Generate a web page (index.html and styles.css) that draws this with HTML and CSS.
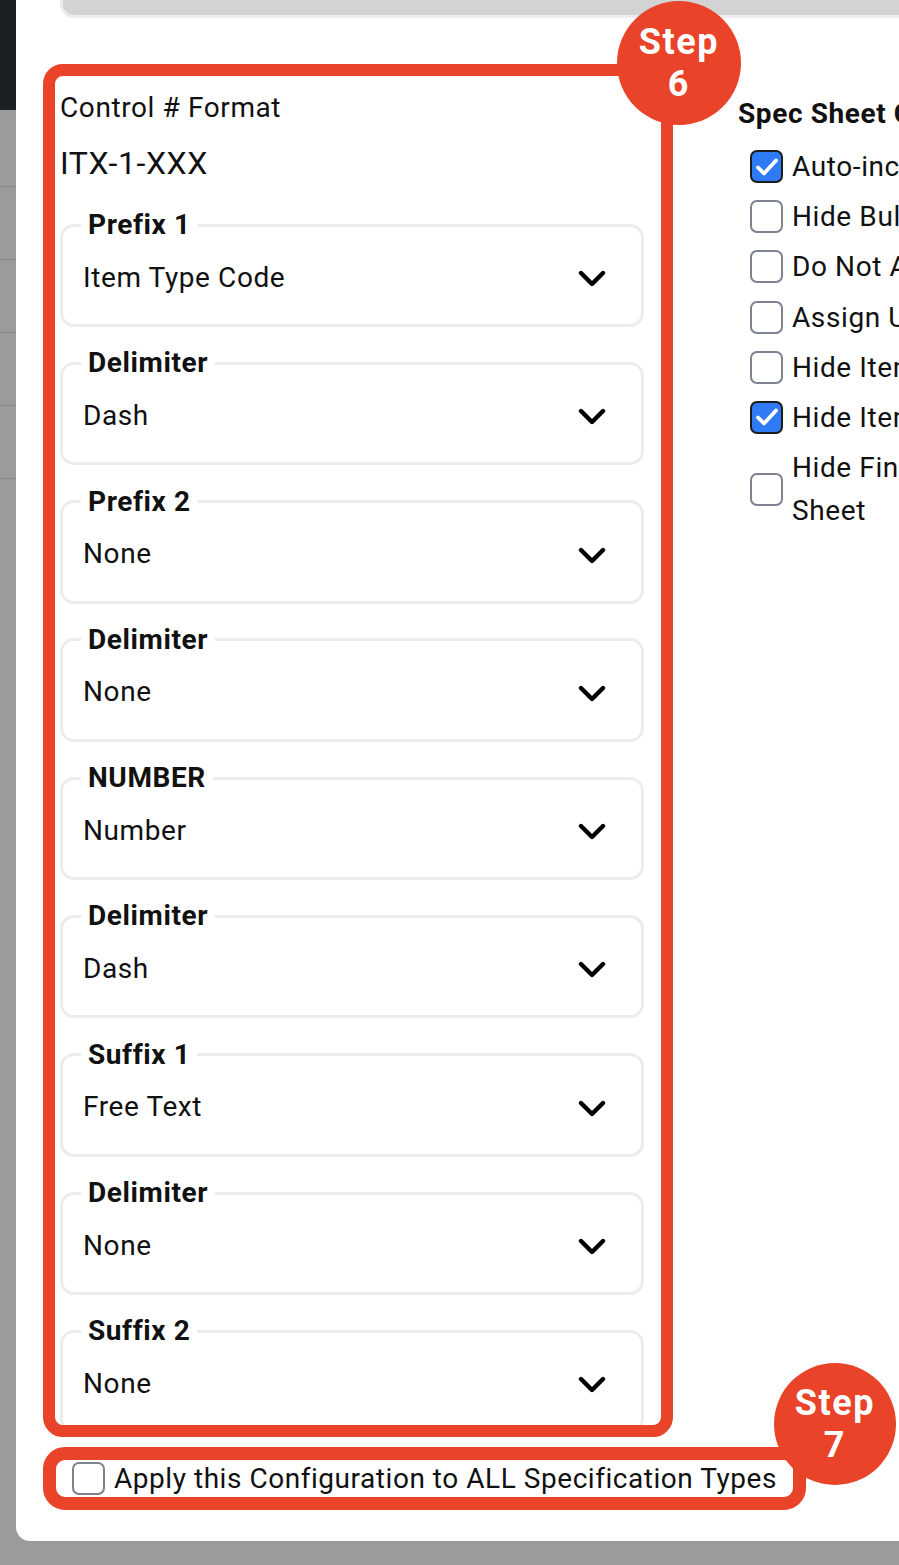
FILE: index.html
```html
<!DOCTYPE html>
<html lang="en">
<head>
    <meta charset="UTF-8">
    <meta name="viewport" content="width=device-width, initial-scale=1.0">
    <title>Control # Format</title>
    <link rel="stylesheet" href="styles.css">
</head>
<body>
<div class="page">
    <aside class="backdrop-nav">
        <div class="nav-top"></div>
        <div class="nav-row first"></div>
        <div class="nav-row"></div>
        <div class="nav-row"></div>
        <div class="nav-row"></div>
        <div class="nav-row"></div>
    </aside>

    <div class="modal">
        <div class="search-bar"></div>

        <div class="modal-body">
            <div class="format-col">
                <div class="format-box">
                    <div class="format-label">Control # Format</div>
                    <div class="format-preview">ITX-1-XXX</div>

                    <fieldset class="field">
                        <legend>Prefix 1</legend>
                        <div class="field-value"><span>Item Type Code</span><svg class="chevron" viewBox="0 0 28 18"><polyline points="3,3 14,14 25,3"/></svg></div>
                    </fieldset>
                    <fieldset class="field">
                        <legend>Delimiter</legend>
                        <div class="field-value"><span>Dash</span><svg class="chevron" viewBox="0 0 28 18"><polyline points="3,3 14,14 25,3"/></svg></div>
                    </fieldset>
                    <fieldset class="field">
                        <legend>Prefix 2</legend>
                        <div class="field-value"><span>None</span><svg class="chevron" viewBox="0 0 28 18"><polyline points="3,3 14,14 25,3"/></svg></div>
                    </fieldset>
                    <fieldset class="field">
                        <legend>Delimiter</legend>
                        <div class="field-value"><span>None</span><svg class="chevron" viewBox="0 0 28 18"><polyline points="3,3 14,14 25,3"/></svg></div>
                    </fieldset>
                    <fieldset class="field">
                        <legend>NUMBER</legend>
                        <div class="field-value"><span>Number</span><svg class="chevron" viewBox="0 0 28 18"><polyline points="3,3 14,14 25,3"/></svg></div>
                    </fieldset>
                    <fieldset class="field">
                        <legend>Delimiter</legend>
                        <div class="field-value"><span>Dash</span><svg class="chevron" viewBox="0 0 28 18"><polyline points="3,3 14,14 25,3"/></svg></div>
                    </fieldset>
                    <fieldset class="field">
                        <legend>Suffix 1</legend>
                        <div class="field-value"><span>Free Text</span><svg class="chevron" viewBox="0 0 28 18"><polyline points="3,3 14,14 25,3"/></svg></div>
                    </fieldset>
                    <fieldset class="field">
                        <legend>Delimiter</legend>
                        <div class="field-value"><span>None</span><svg class="chevron" viewBox="0 0 28 18"><polyline points="3,3 14,14 25,3"/></svg></div>
                    </fieldset>
                    <fieldset class="field">
                        <legend>Suffix 2</legend>
                        <div class="field-value"><span>None</span><svg class="chevron" viewBox="0 0 28 18"><polyline points="3,3 14,14 25,3"/></svg></div>
                    </fieldset>
                </div>

                <label class="apply-box">
                    <span class="box"></span>
                    <span>Apply this Configuration to ALL Specification Types</span>
                </label>

                <div class="step-badge step-6">Step<br>6</div>
                <div class="step-badge step-7">Step<br>7</div>
            </div>

            <div class="options-col">
                <div class="options-title">Spec Sheet Options</div>
                <div class="options-list">
                    <label class="option"><span class="box checked"><svg viewBox="0 0 28 28"><polyline points="5,14.5 11,20.5 23,7.5"/></svg></span><span>Auto-increment Control #</span></label>
                    <label class="option"><span class="box"></span><span>Hide Bulk Pricing</span></label>
                    <label class="option"><span class="box"></span><span>Do Not Auto-fill Vendor</span></label>
                    <label class="option"><span class="box"></span><span>Assign Unique Numbers</span></label>
                    <label class="option"><span class="box"></span><span>Hide Item Cost</span></label>
                    <label class="option"><span class="box checked"><svg viewBox="0 0 28 28"><polyline points="5,14.5 11,20.5 23,7.5"/></svg></span><span>Hide Item Images</span></label>
                    <label class="option wrap"><span class="box"></span><span>Hide Final Spec Sheet</span></label>
                </div>
            </div>
        </div>
    </div>
</div>
</body>
</html>
```

FILE: styles.css
```css
html, body {
    margin: 0;
    padding: 0;
}
body {
    font-family: Roboto, 'Liberation Sans', sans-serif;
    color: #111;
    background-color: #9b9b9b;
    letter-spacing: 0.6px;
    overflow: hidden;
}
.page {
    display: flex;
    width: 899px;
    height: 1565px;
    overflow: hidden;
}

/* page behind the modal */
.backdrop-nav {
    width: 16px;
    flex-shrink: 0;
    background-color: #9b9b9b;
}
.nav-top {
    height: 110px;
    background-color: #1d2023;
}
.nav-row {
    height: 72px;
    border-bottom: 1px solid #888;
}
.nav-row.first {
    height: 76px;
}

.modal {
    flex: 1;
    min-width: 0;
    height: 1541px;
    background-color: #fff;
    border-bottom-left-radius: 14px;
    overflow: hidden;
}
.search-bar {
    margin-left: 44px;
    height: 15px;
    background-color: #d3d3d3;
    border: 3px solid #ececec;
    border-top: 0;
    border-right: 0;
    border-bottom-left-radius: 14px;
}
.modal-body {
    display: flex;
    align-items: flex-start;
    padding: 46px 0 0 27px;
}

/* control # format column */
.format-col {
    position: relative;
    width: 630px;
    flex-shrink: 0;
}
.format-box {
    box-sizing: border-box;
    height: 1373px;
    border: 12px solid #e9432a;
    border-radius: 20px;
    padding: 15px 17px 0 5px;
    overflow: hidden;
}
.format-label {
    font-size: 28px;
    line-height: 34px;
}
.format-preview {
    font-size: 32px;
    line-height: 40px;
    margin: 18px 0 25px;
}
.field {
    margin: 0 0 19.3px;
    min-width: 0;
    padding: 15px 35px 27px 18px;
    border: 3px solid #ececec;
    border-radius: 14px;
}
.field legend {
    font-weight: 700;
    font-size: 28px;
    line-height: 34px;
    padding: 0 7px;
}
.field-value {
    display: flex;
    justify-content: space-between;
    align-items: center;
    height: 40px;
    padding-left: 2px;
    font-size: 28px;
}
.chevron {
    width: 28px;
    height: 18px;
    margin-top: 4px;
    fill: none;
    stroke: #000;
    stroke-width: 4.4;
    stroke-linecap: round;
    stroke-linejoin: round;
}

.apply-box {
    display: inline-flex;
    align-items: center;
    gap: 9px;
    margin-top: 10px;
    height: 37px;
    padding: 0 16px;
    border: 13px solid #e9432a;
    border-radius: 22px;
    font-size: 28px;
    letter-spacing: 0.54px;
    white-space: nowrap;
}

.step-badge {
    position: absolute;
    width: 124px;
    height: 124px;
    border-radius: 50%;
    background-color: #e9432a;
    color: #fff;
    font-weight: 700;
    font-size: 36px;
    line-height: 42px;
    letter-spacing: 1.6px;
    display: flex;
    align-items: center;
    justify-content: center;
    text-align: center;
}
.step-6 {
    left: 574px;
    top: -63px;
}
.step-7 {
    left: 731px;
    top: 1299px;
    width: 122px;
    height: 122px;
}

/* checkboxes */
.box {
    box-sizing: border-box;
    display: flex;
    align-items: center;
    justify-content: center;
    width: 33px;
    height: 33px;
    flex-shrink: 0;
    border: 2px solid #7c8290;
    border-radius: 7px;
    background-color: #fff;
}
.box.checked {
    background-color: #2f7bf5;
    border-color: #1c1c1c;
}
.box svg {
    width: 28px;
    height: 28px;
    fill: none;
    stroke: #fff;
    stroke-width: 3.8;
    stroke-linecap: round;
    stroke-linejoin: round;
}

/* spec sheet options column */
.options-col {
    flex-shrink: 0;
    width: 400px;
    margin-left: 65px;
    padding-top: 33px;
}
.options-title {
    font-weight: 700;
    font-size: 28px;
    line-height: 34px;
    margin-bottom: 14px;
    white-space: nowrap;
}
.options-list {
    display: flex;
    flex-direction: column;
    gap: 7.2px;
}
.option {
    display: flex;
    align-items: center;
    gap: 9px;
    padding-left: 12px;
    font-size: 28px;
    line-height: 43px;
    white-space: nowrap;
}
.option.wrap {
    white-space: normal;
}
.option.wrap span:last-child {
    width: 220px;
}
```
